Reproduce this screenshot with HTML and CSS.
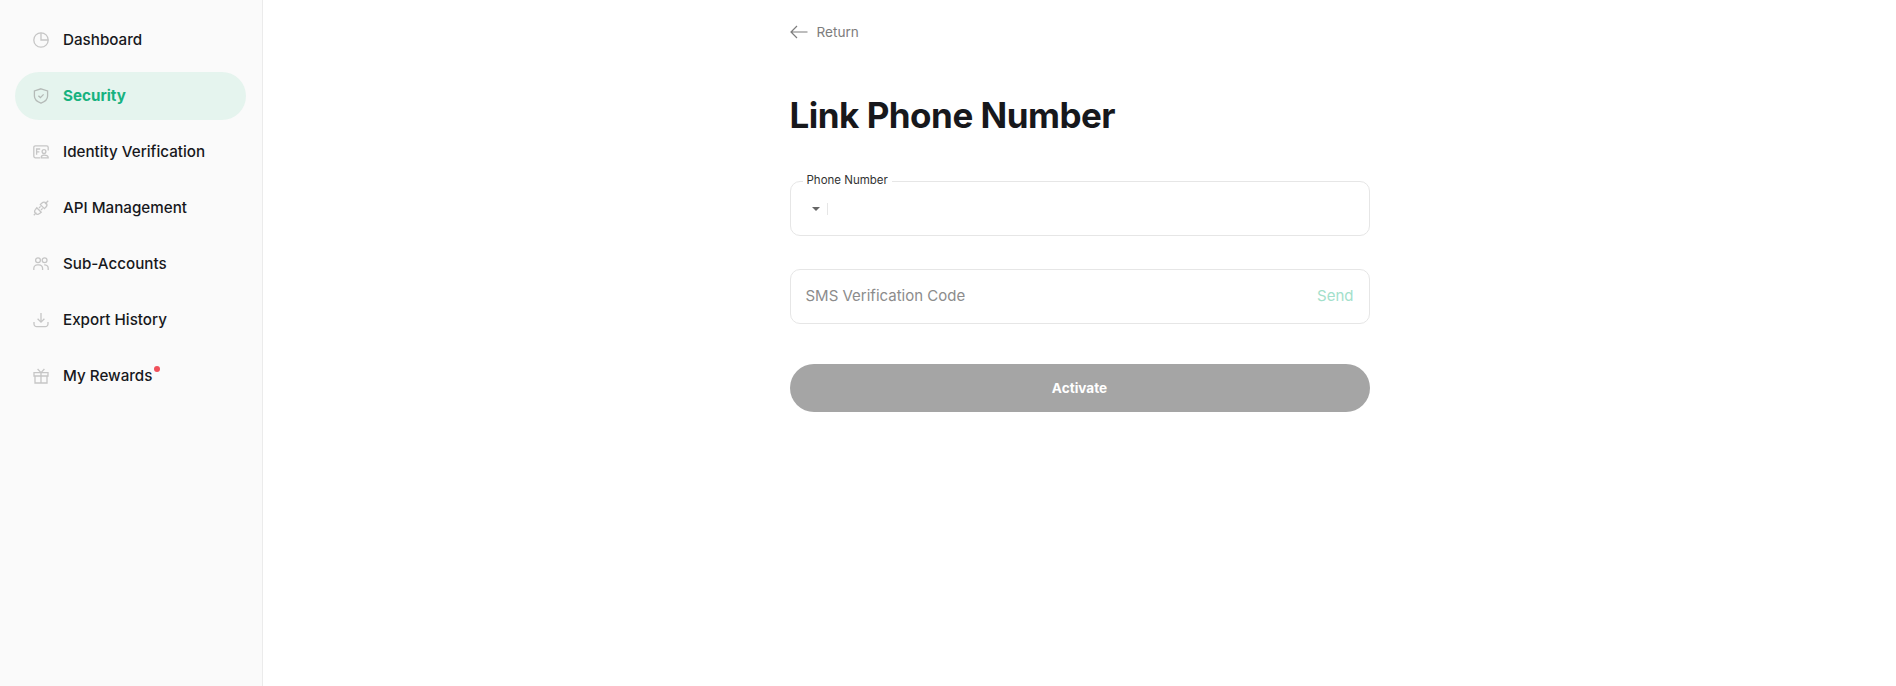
FILE: index.html
```html
<!DOCTYPE html>
<html lang="en">
<head>
    <meta charset="UTF-8">
    <title>Link Phone Number</title>
    <link rel="stylesheet" href="styles.css">
</head>
<body>
    <div class="layout">
        <nav class="sidebar">
            <a class="nav-item">
                <svg class="nav-icon" viewBox="0 0 16 16"><circle cx="8" cy="8" r="7.200"/><path d="M8 .8V8H15.200"/></svg>
                <span class="nav-label">Dashboard</span>
            </a>
            <a class="nav-item active">
                <svg class="nav-icon" viewBox="0 0 16 16"><path d="M8 .8 14.600 3V8c0 3.600-2.800 5.800-6.600 7.200C4.200 13.800 1.400 11.600 1.400 8V3Z"/><path d="M5.400 7.800 7.400 9.600 10.600 6.400"/></svg>
                <span class="nav-label">Security</span>
            </a>
            <a class="nav-item">
                <svg class="nav-icon" viewBox="0 0 16 16"><path d="M7 13.800H2.400A1.600 1.600 0 0 1 .8 12.200V3.400A1.600 1.600 0 0 1 2.400 1.800H13.600A1.600 1.600 0 0 1 15.200 3.400V6.400"/><path d="M3.600 10.800V5H7.200M3.600 7.800H6.400"/><circle cx="11" cy="7.600" r="1.900"/><path d="M8.200 13.800C8.200 11.800 9.400 11.200 11 11.200S15.200 11.800 15.200 13.800Z"/></svg>
                <span class="nav-label">Identity Verification</span>
            </a>
            <a class="nav-item">
                <svg class="nav-icon" viewBox="0 0 16 16"><path d="M3.800 7.800 8.200 12.200 6.600 13.400A2.800 2.800 0 0 1 2.600 9.400Z"/><path d="M3.400 12.600 .8 15.200M6 8 7.600 6.400M8 10 9.600 8.400"/><path d="M7.400 4.600 11.400 8.600 13 7A2.800 2.800 0 0 0 9 3Z"/><path d="M12 4 15.200 .8"/></svg>
                <span class="nav-label">API Management</span>
            </a>
            <a class="nav-item">
                <svg class="nav-icon" viewBox="0 0 16 16"><circle cx="5" cy="4.200" r="2.400"/><circle cx="11.600" cy="4.200" r="2.400"/><path d="M.8 14V12.400A3.600 3.600 0 0 1 4.400 8.800H6A3.600 3.600 0 0 1 9.600 12.400V14"/><path d="M11.200 8.800H12A3.400 3.400 0 0 1 15.200 12.400V14"/></svg>
                <span class="nav-label">Sub-Accounts</span>
            </a>
            <a class="nav-item">
                <svg class="nav-icon" viewBox="0 0 16 16"><path d="M8 1V10M4.600 6.800 8 10.200 11.400 6.800"/><path d="M1 10V12A2.600 2.600 0 0 0 3.600 14.600H12.400A2.600 2.600 0 0 0 15 12V10"/></svg>
                <span class="nav-label">Export History</span>
            </a>
            <a class="nav-item">
                <svg class="nav-icon" viewBox="0 0 16 16"><path d="M1 4.600H15V8H1ZM2 8V15H14V8M8 4.600V15"/><path d="M4.600 1 8 4.600 11.400 1"/></svg>
                <span class="nav-label has-dot">My Rewards<i class="red-dot"></i></span>
            </a>
        </nav>

        <main class="content">
            <div class="panel">
                <a class="back-link">
                    <svg class="back-icon" viewBox="0 0 18 14"><path d="M17.500 7H1M7 1 1 7 7 13"/></svg>
                    <span>Return</span>
                </a>
                <h1>Link Phone Number</h1>
                <div class="field phone-field">
                    <label>Phone Number</label>
                    <i class="caret"></i>
                    <i class="divider"></i>
                </div>
                <div class="field code-field">
                    <span class="placeholder">SMS Verification Code</span>
                    <span class="send">Send</span>
                </div>
                <button class="submit">Activate</button>
            </div>
        </main>
    </div>
</body>
</html>
```

FILE: styles.css
```css
html, body {
    height: 100%;
}
body {
    margin: 0;
    font-family: Inter, "Noto Sans", sans-serif;
    color: #17181c;
    background-color: #fff;
    overflow: hidden;
}
.layout {
    display: flex;
    height: 100%;
}
.sidebar {
    box-sizing: border-box;
    width: 263px;
    flex-shrink: 0;
    padding: 16px 15px 0;
    background-color: #fafafa;
    border-right: 1px solid #ebebeb;
    display: flex;
    flex-direction: column;
    gap: 8px;
}
.nav-item {
    width: 231px;
    height: 48px;
    box-sizing: border-box;
    padding-left: 18px;
    display: flex;
    align-items: center;
    gap: 14px;
    border-radius: 24px;
    font-size: 15.2px;
    font-weight: 500;
}
.nav-label {
    padding-bottom: 2px;
}
.nav-item.active {
    background-color: #e5f4ee;
    color: #17b27f;
    font-weight: 700;
}
.nav-icon {
    width: 16px;
    height: 16px;
    fill: none;
    stroke: #c6c6c6;
    stroke-width: 1.3;
}
.active .nav-icon {
    stroke: #b4bab7;
}
.has-dot {
    position: relative;
}
.red-dot {
    position: absolute;
    right: -8px;
    top: 0;
    width: 6px;
    height: 6px;
    border-radius: 50%;
    background-color: #f0505a;
}
.content {
    flex: 1;
    display: flex;
    justify-content: center;
}
.panel {
    width: 580px;
}
.back-link {
    height: 20px;
    margin-top: 22px;
    display: flex;
    align-items: center;
    gap: 9px;
    font-size: 13.6px;
    color: #7d7d7d;
}
.back-icon {
    width: 18px;
    height: 14px;
    fill: none;
    stroke: #7d7d7d;
    stroke-width: 1.2;
}
h1 {
    margin: 50px 0 0;
    font-size: 35px;
    line-height: 46px;
    font-weight: 700;
    letter-spacing: -0.5px;
    color: #17181c;
}
.field {
    box-sizing: border-box;
    height: 55px;
    border: 1px solid #e6e6e6;
    border-radius: 10px;
    display: flex;
    align-items: center;
    position: relative;
}
.phone-field {
    margin-top: 43px;
    padding-left: 21px;
}
.phone-field label {
    position: absolute;
    left: 12px;
    top: -10px;
    padding: 0 4px;
    background-color: #fff;
    font-size: 11.5px;
    line-height: 16px;
    color: #333;
}
.caret {
    width: 0;
    height: 0;
    border-left: 4px solid transparent;
    border-right: 4px solid transparent;
    border-top: 4px solid #666;
}
.divider {
    width: 1px;
    height: 12px;
    margin-left: 7px;
    background-color: #e6e6e6;
}
.code-field {
    margin-top: 33px;
    padding: 0 15px 2px;
    justify-content: space-between;
    font-size: 15px;
}
.placeholder {
    color: #8c8c8c;
}
.send {
    color: #a3e0cb;
}
.submit {
    display: block;
    width: 100%;
    height: 48px;
    margin-top: 40px;
    border: none;
    border-radius: 24px;
    background-color: #a5a5a5;
    color: #fff;
    font-family: inherit;
    font-size: 13.6px;
    font-weight: 700;
}
```
